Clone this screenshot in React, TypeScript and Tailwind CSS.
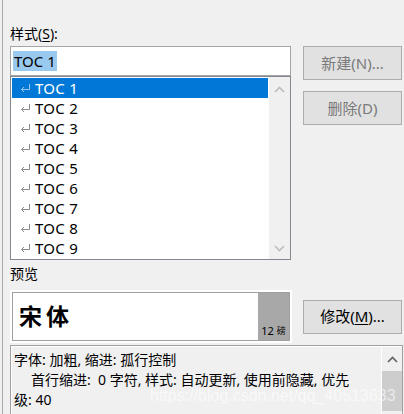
import React from "react";

const UI_FONT = { fontFamily: '"Noto Sans", "Noto Sans CJK SC", sans-serif' };

const styles = ["TOC 1", "TOC 2", "TOC 3", "TOC 4", "TOC 5", "TOC 6", "TOC 7", "TOC 8", "TOC 9"];

function ReturnMark({ light }: { light?: boolean }) {
    const c = light ? "#9cc6ec" : "#8c8c8c";
    return (
        <svg width="11" height="10" viewBox="0 0 11 10" className="shrink-0">
            <path d="M9.5 1 V6.5 H1.5" fill="none" stroke={c} strokeWidth="1" />
            <path d="M4 4 L1.5 6.5 L4 9" fill="none" stroke={c} strokeWidth="1" />
        </svg>
    );
}

function Chevron({ up, color }: { up?: boolean; color: string }) {
    return (
        <svg width="11" height="7" viewBox="0 0 11 7">
            <path
                d={up ? "M1 6 L5.5 1.5 L10 6" : "M1 1 L5.5 5.5 L10 1"}
                fill="none"
                stroke={color}
                strokeWidth="1.6"
            />
        </svg>
    );
}

function DialogButton({ label, disabled }: { label: React.ReactNode; disabled?: boolean }) {
    return (
        <div
            className={`h-[34px] w-[99px] flex items-center justify-center border border-[#adadad] bg-[#e1e1e1] text-[15px] ${
                disabled ? "text-[#7a7a7a]" : "text-black"
            }`}
        >
            {label}
        </div>
    );
}

export default function App() {
    return (
        <div className="relative h-[414px] w-[404px] overflow-hidden bg-[#f0f0f0]" style={UI_FONT}>
            <div className="ml-[2px] h-full border-l border-[#a8a8a8] pl-[7px] pt-[24px]">
                {/* styles label */}
                <div className="h-[20px] text-[14px] leading-[20px] text-black">
                    样式(<span className="underline underline-offset-2">S</span>):
                </div>

                <div className="mt-[2px] flex gap-[12px]">
                    <div className="w-[281px]">
                        {/* name box */}
                        <div className="h-[30px] border border-[#a5a5a5] bg-white pl-[2px] pt-[2px]">
                            <span className="inline-block h-[20px] bg-[#99c9ef] px-[1px] text-[15px] leading-[20px] text-black">
                                TOC 1
                            </span>
                        </div>
                        {/* style list */}
                        <div className="flex h-[184px] border border-[#828790] bg-white">
                            <div className="flex-1 p-[1px]">
                                {styles.map((s, i) => (
                                    <div
                                        key={s}
                                        className={`flex h-[20px] items-center pl-[8px] text-[15px] leading-[20px] ${
                                            i === 0 ? "bg-[#0078d7] text-white" : "text-black"
                                        }`}
                                    >
                                        <ReturnMark light={i === 0} />
                                        <span className="ml-[4px] tracking-[0.3px]">{s}</span>
                                    </div>
                                ))}
                            </div>
                            <div className="flex w-[21px] flex-col items-center justify-between bg-[#f0f0f0] pb-[7px] pt-[9px]">
                                <Chevron up color="#bdbdbd" />
                                <Chevron color="#bdbdbd" />
                            </div>
                        </div>
                    </div>

                    <div className="flex flex-col gap-[11px]">
                        <DialogButton label="新建(N)..." disabled />
                        <DialogButton label="删除(D)" disabled />
                    </div>
                </div>

                {/* preview label */}
                <div className="mt-[4px] h-[20px] text-[14px] leading-[20px] text-black">预览</div>

                <div className="mt-[6px] flex items-center gap-[11px]">
                    <div className="h-[53px] w-[282px] border-2 border-white">
                        <div className="flex h-full border border-[#a0a0a0] bg-white">
                            <div className="flex flex-1 items-center pl-[6px] text-[23px] font-bold tracking-[4px] text-black">
                                宋体
                            </div>
                            <div className="flex w-[31px] items-end justify-center bg-[#a8a8a8] pb-[2px] text-[11px] leading-[14px] text-black">
                                12<span className="ml-[3px] text-[9px]">磅</span>
                            </div>
                        </div>
                    </div>
                    <DialogButton
                        label={
                            <>
                                修改(<span className="underline underline-offset-2">M</span>)...
                            </>
                        }
                    />
                </div>

                {/* description */}
                <div className="mt-[2px] flex h-[80px] w-[393px] border border-[#a0a0a0]">
                    <div className="flex flex-1 border-l border-t border-white">
                        <div className="flex-1 pl-[2px] pt-[3px] text-[14px] leading-[20px] text-black">
                            <div>字体: 加粗, 缩进: 孤行控制</div>
                            <div className="pl-[17px] whitespace-pre">首行缩进:  0 字符, 样式: 自动更新, 使用前隐藏, 优先</div>
                            <div>级: 40</div>
                        </div>
                        <div className="flex w-[21px] flex-col border-l border-white bg-[#f0f0f0]">
                            <div className="flex h-[24px] items-center justify-center">
                                <Chevron up color="#606060" />
                            </div>
                            <div className="h-[40px] bg-[#cdcdcd]" />
                        </div>
                    </div>
                </div>
            </div>

            {/* watermark */}
            <div
                className="pointer-events-none absolute left-[150px] top-[384px] text-[16px] text-white/60"
                style={{ fontFamily: '"Liberation Sans", sans-serif' }}
            >
                https://blog.csdn.net/qq_40513633
            </div>
        </div>
    );
}
